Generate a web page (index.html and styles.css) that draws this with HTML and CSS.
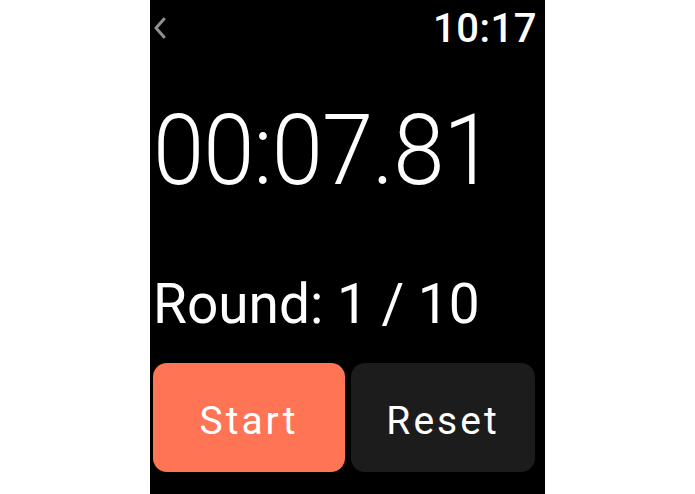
FILE: index.html
```html
<!DOCTYPE html>
<html>
<head>
<meta charset="utf-8">
<link rel="stylesheet" href="styles.css">
</head>
<body>
<div class="screen">
  <div class="header">
    <svg class="back" width="14" height="22" viewBox="0 0 14 22"><polyline points="11,2 3,11 11,20" fill="none" stroke="#8e8e93" stroke-width="3" stroke-linecap="round" stroke-linejoin="round"/></svg>
    <div class="clock">10:17</div>
  </div>
  <div class="timer">00:07.81</div>
  <div class="round">Round: 1 / 10</div>
  <div class="buttons">
    <div class="btn start">Start</div>
    <div class="btn reset">Reset</div>
  </div>
</div>
</body>
</html>
```
FILE: styles.css
```css
html, body { margin: 0; padding: 0; background: #fff; }
body { width: 695px; height: 494px; overflow: hidden; font-family: Roboto, "Liberation Sans", sans-serif; }
.screen {
  margin-left: 150px;
  width: 395px;
  height: 494px;
  background: #000;
  color: #fff;
  box-sizing: border-box;
  padding: 0 10px 0 3px;
  display: flex;
  flex-direction: column;
}
.header {
  display: flex;
  justify-content: space-between;
  align-items: flex-start;
  padding-top: 8px;
  height: 41px;
}
.back { margin-top: 9px; margin-left: 0; }
.clock { font-size: 40px; line-height: 41px; font-weight: 500; margin-right: -2px; letter-spacing: 0.5px; }
.timer {
  margin-top: 53px;
  font-size: 98px;
  line-height: 98px;
  font-weight: 300;
  letter-spacing: -1px;
  white-space: nowrap;
  transform: scaleX(0.94);
  transform-origin: left center;
}
.round {
  margin-top: 77px;
  font-size: 55px;
  line-height: 55px;
  font-weight: 400;
  white-space: nowrap;
}
.buttons {
  margin-top: 31px;
  display: flex;
  gap: 6px;
}
.btn {
  height: 109px;
  border-radius: 14px;
  display: flex;
  align-items: center;
  justify-content: center;
  font-size: 39px;
  letter-spacing: 3px;
  padding-top: 6px;
  box-sizing: border-box;
}
.start { width: 192px; background: #ff7455; }
.reset { width: 184px; background: #1c1c1c; }
```
